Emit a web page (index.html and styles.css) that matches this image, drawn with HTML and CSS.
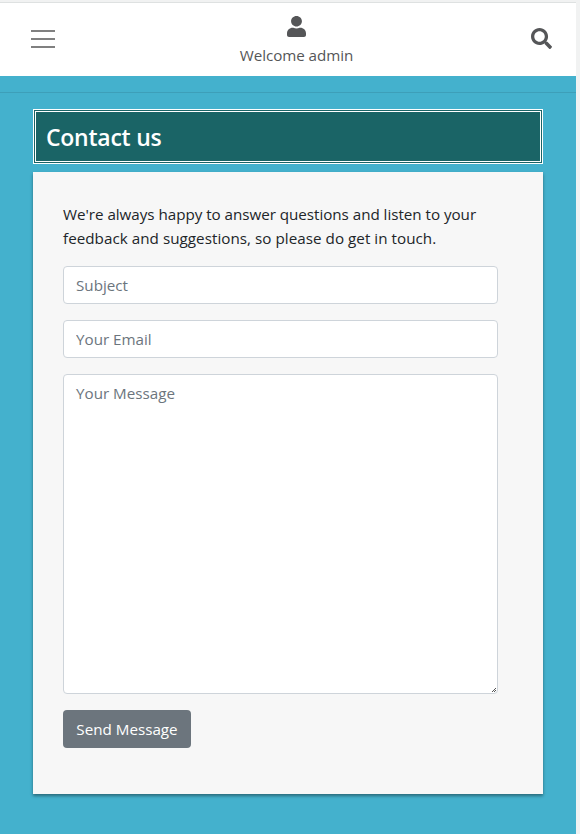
FILE: index.html
```html
<!DOCTYPE html>
<html lang="en">
<head>
<meta charset="utf-8">
<title>Contact us</title>
<link rel="stylesheet" href="styles.css">
</head>
<body>
<div class="page">
  <header class="topbar">
    <button class="icon-button menu" aria-label="Menu">
      <svg width="24" height="18" viewBox="0 0 24 18"><path d="M0 1h24M0 9h24M0 17h24" stroke="#808080" stroke-width="2"/></svg>
    </button>
    <div class="account">
      <svg class="user-icon" width="19" height="21" viewBox="0 0 448 512" preserveAspectRatio="none"><path fill="currentColor" d="M224 256c70.700 0 128-57.300 128-128S294.700 0 224 0 96 57.300 96 128s57.300 128 128 128zm89.600 32h-16.700c-22.200 10.200-46.900 16-72.900 16s-50.600-5.800-72.900-16h-16.700C60.200 288 0 348.200 0 422.400V464c0 26.500 21.500 48 48 48h352c26.500 0 48-21.500 48-48v-41.600c0-74.200-60.200-134.400-134.400-134.400z"/></svg>
      <span class="welcome">Welcome admin</span>
    </div>
    <button class="icon-button search" aria-label="Search">
      <svg width="21" height="21" viewBox="0 0 512 512"><path fill="currentColor" d="M505 442.700L405.300 343c-4.500-4.500-10.600-7-17-7H372c27.600-35.300 44-79.700 44-128C416 93.100 322.900 0 208 0S0 93.100 0 208s93.100 208 208 208c48.300 0 92.700-16.400 128-44v16.300c0 6.400 2.500 12.500 7 17l99.700 99.700c9.400 9.400 24.600 9.400 33.900 0l28.300-28.300c9.400-9.400 9.400-24.600.1-34zM208 336c-70.700 0-128-57.200-128-128 0-70.700 57.200-128 128-128 70.700 0 128 57.200 128 128 0 70.700-57.200 128-128 128z"/></svg>
    </button>
  </header>
  <hr class="divider">
  <main class="content">
    <h1 class="title">Contact us</h1>
    <form class="card">
      <p class="intro"><span class="line">We're always happy to answer questions and listen to your</span><br><span class="line-last">feedback and suggestions, so please do get in touch.</span></p>
      <input class="field" type="text" placeholder="Subject">
      <input class="field" type="text" placeholder="Your Email">
      <div class="message-box">
        <textarea class="field message" placeholder="Your Message"></textarea>
        <svg class="grip" width="4" height="4" viewBox="0 0 4 4" shape-rendering="crispEdges"><path fill="#555" d="M3 0h1v1H3zM2 1h1v1H2zM1 2h1v1H1zM3 2h1v1H3zM0 3h1v1H0zM2 3h1v1H2z"/></svg>
      </div>
      <button class="submit" type="button">Send Message</button>
    </form>
  </main>
</div>
</body>
</html>
```
FILE: styles.css
```css
* { box-sizing: border-box; }

body {
  margin: 0;
  height: 834px;
  overflow: hidden;
  background: #f1f2f2;
  color: #212529;
  font: 15.2px/24px "Open Sans", "Noto Sans", sans-serif;
}

.page {
  width: 576px;
  height: 832px;
  margin-top: 2px;
  border-top: 1px solid #dee1e1;
  background: #44b1cd;
}

.topbar {
  display: grid;
  grid-template-columns: 1fr auto 1fr;
  height: 73px;
  padding: 0 24px 0 31px;
  background: #fff;
  color: #555658;
}

.icon-button {
  padding: 0;
  border: 0;
  background: none;
  color: inherit;
}

.icon-button svg, .user-icon { display: block; }
.menu { justify-self: start; align-self: start; margin-top: 27px; }
.search { justify-self: end; align-self: start; margin-top: 25px; }

.account {
  display: flex;
  flex-direction: column;
  align-items: center;
  padding-top: 13px;
  margin-left: 10px;
}

.welcome { margin-top: 6px; letter-spacing: -0.05px; }

.divider {
  height: 1px;
  margin: 16px 0;
  border: 0;
  background: #3d9fb9;
}

.content { padding: 0 33px; }

.title {
  height: 55px;
  margin: 0 0 8px;
  padding: 0 10px;
  border: 3px double #fff;
  background: #1a6466;
  color: #fff;
  font-size: 23px;
  font-weight: 600;
  letter-spacing: -0.25px;
  line-height: 50px;
}

.card {
  display: flex;
  flex-direction: column;
  align-items: flex-start;
  gap: 16px;
  height: 622px;
  padding: 30px 45px 0 30px;
  background: #f7f7f7;
  box-shadow: 0 2px 3px rgba(0, 0, 0, .4);
}

.intro { margin: 0; white-space: nowrap; }
.line { letter-spacing: -0.03px; }
.line-last { letter-spacing: 0.04px; }

.field {
  display: block;
  width: 100%;
  height: 38px;
  margin: 0;
  padding: 6px 12px;
  border: 1px solid #ced4da;
  border-radius: 4px;
  background: #fff;
  color: #495057;
  font: inherit;
}

.field::placeholder { color: #6c757d; opacity: 1; }
.message-box { position: relative; width: 100%; }
.message { height: 320px; resize: none; }
.grip { position: absolute; right: 2px; bottom: 2px; }

.submit {
  width: 128px;
  height: 38px;
  padding: 0;
  border: 0;
  border-radius: 4px;
  background: #6c757d;
  color: #fff;
  font: inherit;
}
```
